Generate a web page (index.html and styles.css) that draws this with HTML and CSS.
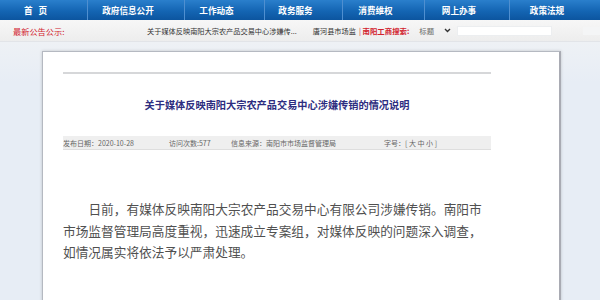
FILE: index.html
```html
<!DOCTYPE html>
<html lang="zh-CN">
<head>
<meta charset="utf-8">
<title>关于媒体反映南阳大宗农产品交易中心涉嫌传销的情况说明</title>
<link rel="stylesheet" href="styles.css">
</head>
<body>
<nav class="nav">
  <a class="nav-item">首&nbsp;&nbsp;&nbsp;页</a>
  <a class="nav-item">政府信息公开</a>
  <a class="nav-item">工作动态</a>
  <a class="nav-item">政务服务</a>
  <a class="nav-item">消费维权</a>
  <a class="nav-item">网上办事</a>
  <a class="nav-item">政策法规</a>
</nav>
<div class="notice">
  <span class="notice-label">最新公告公示:</span>
  <div class="marquee">
    <span class="marquee-item first">关于媒体反映南阳大宗农产品交易中心涉嫌传...</span>
    <span class="marquee-item">唐河县市场监</span>
  </div>
  <span class="search-label"><span class="bar">|</span> 南阳工商搜索:</span>
  <span class="select">标题
    <svg class="chev" width="7" height="5" viewBox="0 0 7 5"><path d="M1 1 L3.5 3.5 L6 1" fill="none" stroke="#333" stroke-width="1.4"/></svg>
  </span>
  <span class="search-input"></span>
  <span class="search-btn"></span>
</div>
<main class="main">
  <article class="card">
    <div class="rule"></div>
    <h1 class="title">关于媒体反映南阳大宗农产品交易中心涉嫌传销的情况说明</h1>
    <div class="meta">
      <span class="m-date">发布日期：2020-10-28</span>
      <span class="m-visits">访问次数:577</span>
      <span class="m-source">信息来源：南阳市市场监督管理局</span>
      <span class="m-size">字号：[ 大 中 小 ]</span>
    </div>
    <p class="body">日前，有媒体反映南阳大宗农产品交易中心有限公司涉嫌传销。南阳市市场监督管理局高度重视，迅速成立专案组，对媒体反映的问题深入调查，如情况属实将依法予以严肃处理。</p>
  </article>
</main>
</body>
</html>
```

FILE: styles.css
```css
html, body {
  margin: 0;
  padding: 0;
}
body {
  width: 600px;
  height: 300px;
  overflow: hidden;
  background: #e9eef5;
  font-family: "Noto Sans CJK SC", "Noto Sans", sans-serif;
}
.nav {
  display: grid;
  grid-template-columns: 88px 97px 80px 78px 82px 85px 90px;
  height: 20px;
  background: linear-gradient(#2a7fcc, #1465b3 55%, #0c559f);
}
.nav-item {
  display: flex;
  align-items: center;
  justify-content: center;
  padding-right: 16px;
  color: #fff;
  font-size: 8.6px;
  font-weight: bold;
  white-space: nowrap;
  border-right: 1px solid #4f8fd0;
}
.nav-item:last-child {
  border-right: none;
}
.notice {
  display: flex;
  align-items: center;
  height: 21px;
  background: linear-gradient(#f7f7f7, #ededed);
  border-bottom: 1px solid #e2e4e8;
  font-size: 7.2px;
  line-height: 10px;
  color: #333;
  white-space: nowrap;
}
.notice > * {
  flex-shrink: 0;
}
.notice-label {
  margin-left: 13px;
  width: 134px;
  color: #d2222e;
  font-size: 8.2px;
}
.marquee {
  display: flex;
}
.marquee-item.first {
  margin-right: 16px;
}
.search-label {
  margin-left: 3px;
  color: #d2222e;
  font-weight: bold;
  font-size: 7.4px;
}
.bar {
  font-weight: normal;
}
.select {
  display: flex;
  align-items: center;
  margin-left: 10px;
  color: #666;
  font-size: 7.4px;
}
.chev {
  margin-left: 10px;
}
.search-input {
  margin-left: 6px;
  width: 93px;
  height: 8px;
  background: #fff;
  border: 1px solid #eceef0;
}
.search-btn {
  margin-left: 31px;
  width: 22px;
  height: 8px;
  background: #f4f5f6;
}
.main {
  padding: 9px 0 0 42px;
  height: 260px;
  background: linear-gradient(#eef1f5, #e7edf5 40px);
}
.card {
  width: 496px;
  height: 260px;
  padding: 0 0 0 20px;
  background: #fff;
  border: 1px solid #b5b9c1;
  border-right: 2px solid #a9abb3;
  box-shadow: 0 0 3px rgba(0, 0, 0, 0.18);
}
.rule {
  margin-top: 20px;
  width: 428px;
  height: 2px;
  background: #d6d7d9;
}
.title {
  width: 428px;
  margin: 24px 0 0;
  text-align: center;
  font-size: 10.2px;
  line-height: 14px;
  font-weight: bold;
  color: #2d2d80;
}
.meta {
  display: flex;
  align-items: center;
  width: 428px;
  height: 13px;
  margin-top: 24px;
  background: #efefef;
  border-bottom: 1px solid #dedede;
  font-size: 7px;
  color: #666;
  white-space: nowrap;
}
.m-date { width: 106px; }
.m-visits { width: 62px; }
.m-source { width: 153px; }
.body {
  width: 428px;
  margin: 48px 0 0;
  font-size: 12.7px;
  line-height: 21.5px;
  text-indent: 2em;
  color: #505050;
}
```
